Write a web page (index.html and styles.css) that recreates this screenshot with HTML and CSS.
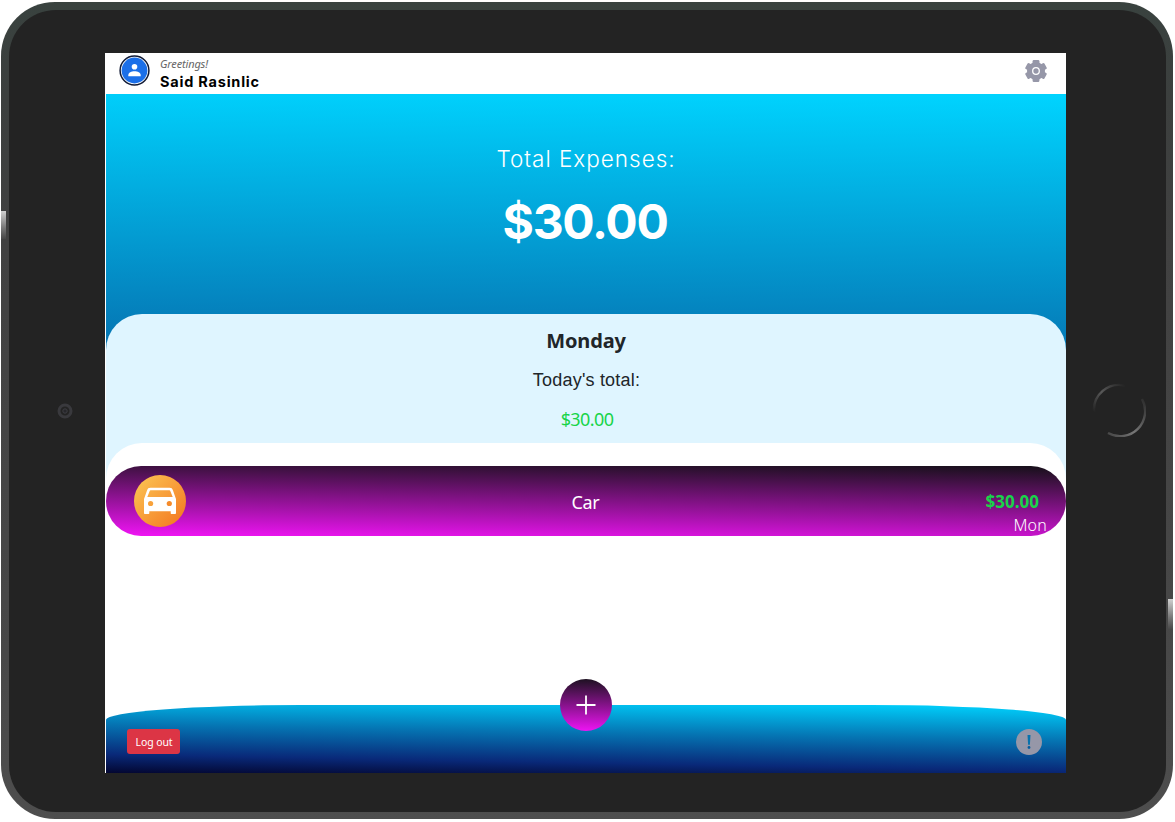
FILE: index.html
```html
<!DOCTYPE html>
<html lang="en">
<head>
<meta charset="utf-8">
<title>Expenses</title>
<link rel="stylesheet" href="styles.css">
</head>
<body>
<div class="tablet">
  <span class="side-button side-button-left"></span>
  <span class="side-button side-button-right"></span>
  <div class="bezel">
    <div class="bezel-side bezel-left">
      <svg class="camera" width="18" height="18" viewBox="0 0 18 18"><circle cx="9" cy="9" r="6" fill="none" stroke="#39393d" stroke-width="3"/><circle cx="9" cy="9" r="2.2" fill="#27272b" stroke="#3e3e44"/></svg>
    </div>
    <main class="screen">
      <header class="topbar">
        <svg class="avatar" width="31" height="31" viewBox="0 0 31 31"><circle cx="15.5" cy="15.5" r="14.4" fill="#fff" stroke="#111a35" stroke-width="1.5"/><circle cx="15.5" cy="15.5" r="12.9" fill="#1b6fe8"/><circle cx="15.5" cy="11.7" r="2.8" fill="#fff"/><path d="M9.3 21.3v-1.200c0-2.500 3.100-3.900 6.200-3.900s6.200 1.400 6.200 3.900v1.200z" fill="#fff"/></svg>
        <div class="user"><span class="greeting">Greetings!</span><strong class="name">Said Rasinlic</strong></div>
        <svg class="gear" width="24" height="24" viewBox="0 0 24 24"><g fill="#9697a8"><circle cx="12" cy="12" r="9"/><rect x="8.600" y="1" width="6.800" height="22" rx="1.200"/><rect x="8.600" y="1" width="6.800" height="22" rx="1.200" transform="rotate(60 12 12)"/><rect x="8.600" y="1" width="6.800" height="22" rx="1.200" transform="rotate(120 12 12)"/></g><circle cx="12" cy="12" r="3.300" fill="none" stroke="#fff" stroke-width="1.300"/></svg>
      </header>
      <section class="hero">
        <p class="hero-label">Total Expenses:</p>
        <p class="hero-total">$30.00</p>
      </section>
      <section class="day">
        <h2 class="day-name">Monday</h2>
        <p class="day-label">Today's total:</p>
        <p class="day-total">$30.00</p>
      </section>
      <section class="list">
        <article class="expense">
          <svg class="car" width="52" height="52" viewBox="0 0 52 52"><defs><linearGradient id="orange" x1="0" y1="0" x2="1" y2="1"><stop offset=".1" stop-color="#fbc050"/><stop offset=".9" stop-color="#f47c24"/></linearGradient></defs><circle cx="26" cy="26" r="26" fill="url(#orange)"/><path fill="#fff" fill-rule="evenodd" d="M16.500 12.800h19c2 0 2.800.7 3.500 2.700L42 24v14c0 .7-.5 1-1 1h-3.300c-.7 0-1-.3-1-1v-1.700H15.300V38c0 .7-.3 1-1 1H11c-.5 0-1-.3-1-1V24l3-8.500c.7-2 1.500-2.700 3.500-2.700zM17 15.200c-.7 0-1.100.2-1.400 1L13.300 22H38.700L36.400 16.200c-.3-.8-.7-1-1.400-1z"/><circle cx="16.600" cy="28.500" r="2.600" fill="#f8a23b"/><circle cx="35.300" cy="28.500" r="2.600" fill="#f58b2b"/></svg>
          <span class="category">Car</span>
          <div class="amounts"><strong class="amount">$30.00</strong><span class="weekday">Mon</span></div>
        </article>
      </section>
      <footer class="footer">
        <button class="logout">Log out</button>
        <svg class="info" width="26" height="26" viewBox="0 0 26 26"><circle cx="13" cy="13" r="13" fill="#9697a8"/><path d="M11.500 6h3l-.6 9.800h-1.800z" fill="#0872ad"/><circle cx="13" cy="18.500" r="1.400" fill="#075e9e"/></svg>
        <button class="add" aria-label="Add"><svg width="20" height="20" viewBox="0 0 20 20"><path d="M10 .5v19M.5 10h19" stroke="#fff" stroke-width="1.800"/></svg></button>
      </footer>
    </main>
    <div class="bezel-side bezel-right">
      <svg class="home" width="54" height="54" viewBox="0 0 54 54"><defs><linearGradient id="arcTop" x1="0" y1="1" x2="1" y2="0"><stop offset="0" stop-color="#232323"/><stop offset=".5" stop-color="#585858"/><stop offset="1" stop-color="#232323"/></linearGradient><linearGradient id="arcBottom" x1="0" y1="1" x2="1" y2="0"><stop offset="0" stop-color="#444"/><stop offset=".4" stop-color="#777"/><stop offset="1" stop-color="#2b2b2b"/></linearGradient></defs><path d="M2 29A25 25 0 0 1 33 2.700" fill="none" stroke="url(#arcTop)" stroke-width="2.400"/><path d="M16 50A25 25 0 0 0 50 16" fill="none" stroke="url(#arcBottom)" stroke-width="2.400"/></svg>
    </div>
  </div>
</div>
</body>
</html>
```
FILE: styles.css
```css
* { box-sizing: border-box; }
body { margin: 0; background: #fff; overflow: hidden; font-family: "Noto Sans", sans-serif; color: #212529; }
p, h2 { margin: 0; }
.tablet {
  position: relative;
  width: 1172px;
  height: 817px;
  margin: 2px 0 0 1px;
  padding: 8px 7px 7px 8px;
  border-radius: 54px;
  background: linear-gradient(#39423f 0, #3c3f3e 12%, #414141 30%, #484848 80%, #4e4e4e 100%);
}
.side-button { position: absolute; width: 5px; background: linear-gradient(#d0d0d0, #777 60%, #464646); }
.side-button-left { left: 0; top: 209px; height: 28px; }
.side-button-right { right: 0; top: 597px; height: 31px; }
.bezel {
  display: flex;
  height: 802px;
  padding: 43px 0 39px;
  border-radius: 47px;
  background: #232323;
}
.bezel-side { display: flex; align-items: center; }
.bezel-left { width: 96px; padding-left: 47px; }
.bezel-right { width: 100px; padding-left: 26px; }
.camera { flex: none; margin-top: -5px; }
.home { flex: none; margin-top: -6px; }
.screen {
  display: flex;
  flex-direction: column;
  width: 961px;
  height: 720px;
  padding-left: 1px;
  background: #fff;
}
.topbar { display: flex; height: 41.4px; padding: 2px 18.5px 0 13px; flex: none; }
.user { display: flex; flex-direction: column; margin-left: 10px; flex: 1; }
.greeting { height: 17px; font-size: 11px; font-style: italic; line-height: 18px; letter-spacing: -.15px; color: #666; }
.name { font: 700 14.5px/20px Inter, sans-serif; color: #000; letter-spacing: .78px; }
.gear { margin-top: 4px; }
.hero {
  height: 260.6px;
  flex: none;
  padding-top: 48px;
  text-align: center;
  color: #fff;
  background: linear-gradient(181deg, #00d4ff, #0575b3 96%);
}
.hero-label { font: 300 22.5px/33px Inter, sans-serif; letter-spacing: .98px; }
.hero-total { margin-top: 17px; padding-right: 2px; font: 700 48px/60px Inter, sans-serif; letter-spacing: -1.3px; }
.day {
  height: 168px;
  flex: none;
  margin-top: -41px;
  padding-top: 11px;
  border-radius: 36px 36px 0 0;
  background: #dff5ff;
  text-align: center;
}
.day-name { font-size: 20px; line-height: 32px; letter-spacing: -.15px; }
.day-label { margin-top: 9px; padding-left: 1px; font: 18px/28px "Liberation Sans", sans-serif; letter-spacing: .2px; }
.day-total { margin-top: 11px; font-size: 18px; line-height: 28px; letter-spacing: -.6px; color: #18d44a; padding-left: 2px; }
.list { flex: 1; margin-top: -39px; padding-top: 23px; border-radius: 36px 36px 0 0; background: #fff; }
.expense {
  display: grid;
  grid-template-columns: 1fr auto 1fr;
  height: 70px;
  padding: 0 19px 0 28px;
  border-radius: 35px;
  color: #fff;
  background: linear-gradient(181deg, #151018, #f014f5);
}
.car { margin-top: 9px; }
.category { margin-left: -10px; font-size: 18px; line-height: 72px; letter-spacing: -.3px; }
.amounts { display: flex; flex-direction: column; align-items: flex-end; padding-top: 23px; }
.amount { font-size: 17px; line-height: 26px; color: #18d44a; margin-right: 8px; }
.weekday { font-size: 16px; font-weight: 300; line-height: 20px; letter-spacing: .2px; }
.footer {
  position: relative;
  display: flex;
  align-items: flex-start;
  justify-content: space-between;
  height: 68px;
  flex: none;
  padding: 24px 24px 0 21px;
  border-radius: 195px 195px 0 0 / 15px 15px 0 0;
  background: linear-gradient(181deg, #00d4ff, #0575b3 42%, #092979 78%, #020024 104%);
}
.logout {
  width: 53px;
  height: 25px;
  padding: 1px 0 0 1px;
  border: 0;
  border-radius: 3px;
  font: 10.5px/24px "Noto Sans", sans-serif;
  letter-spacing: -.1px;
  color: #fff;
  background: #dc3545;
}
.add {
  position: absolute;
  left: 454px;
  top: -26px;
  display: flex;
  align-items: center;
  justify-content: center;
  width: 52px;
  height: 52px;
  padding: 0;
  border: 0;
  border-radius: 50%;
  background: linear-gradient(181deg, #1c1120, #f014f5);
}
```
